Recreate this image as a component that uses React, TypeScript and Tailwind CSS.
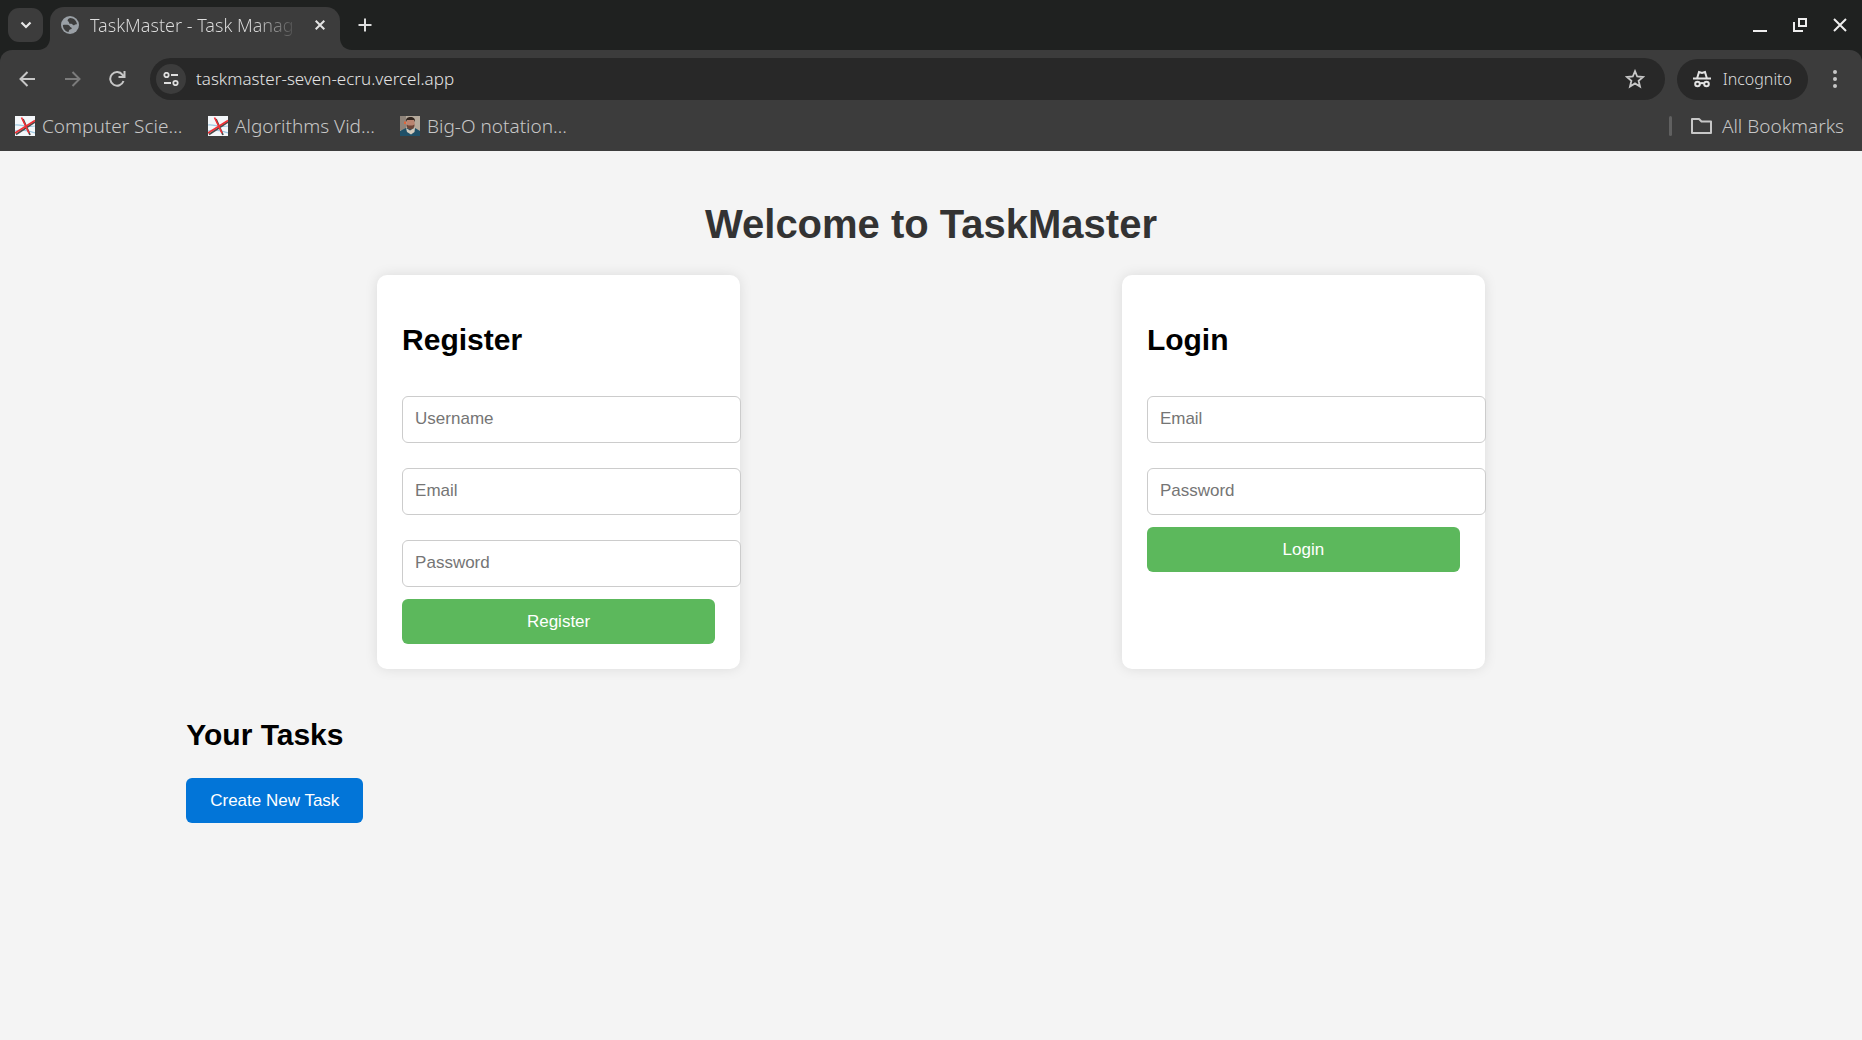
import React from "react";

const chromeFont = "font-['Noto_Sans',sans-serif] font-light";

function Globe() {
  return (
    <svg width="18" height="18" viewBox="0 0 18 18" aria-hidden="true" className="shrink-0">
      <circle cx="9" cy="9" r="9" fill="#9aa0a6" />
      <path d="M9.500 1.900C8 2.200 6.800 3 6.600 4.500C6.500 5.500 8 5.300 8 6.400C8 7.600 9 7.800 10.200 7.800C11.600 7.800 11.600 9.200 12.600 9.200C13.800 9.200 13.600 7.800 16 8.200C15.600 4.600 12.800 2 9.500 1.900ZM1.900 9C3.500 8.800 6.800 8.800 7.800 9.200C8.900 9.700 8.700 11 9.800 11.200C11.200 11.500 11 13 9.800 13.300C8.400 13.600 8 14 7.600 16C4.200 15.400 1.900 12.600 1.900 9Z" fill="#3c3c3c" />
    </svg>
  );
}

function CrossFavicon() {
  return (
    <svg width="20" height="20" viewBox="0 0 20 20" aria-hidden="true" className="shrink-0">
      <rect width="20" height="20" fill="#f4f7fa" />
      <path d="M0 9C6 8 12 12 20 10M0 15C7 13 13 14 20 17" stroke="#9cc6e0" strokeWidth="1.200" fill="none" />
      <path d="M1 18.500 20 6M8 3 15 19" stroke="#4a4a4a" strokeWidth="1.800" fill="none" />
      <path d="M0 17 20 4.500M6.500 1.500 14 17" stroke="#f02f35" strokeWidth="1.700" fill="none" />
    </svg>
  );
}

function PortraitFavicon() {
  return (
    <svg width="20" height="20" viewBox="0 0 20 20" aria-hidden="true" className="shrink-0">
      <rect width="20" height="20" fill="#b5aa9c" />
      <rect width="6" height="14" fill="#8f847a" />
      <path d="M0 20V15L6 12H15L20 15V20Z" fill="#1f5068" />
      <ellipse cx="10.500" cy="7.500" rx="4.200" ry="5.500" fill="#b98470" />
      <path d="M6 6C5.500 2 8 1 10.500 1C13.500 1 15.500 2.500 15 6L14 4H7Z" fill="#33261f" />
      <path d="M6.500 8.500 8.500 9.500H12.500L14.500 8.500C14.500 12 13 13.500 10.500 13.500C8 13.500 6.500 12 6.500 8.500Z" fill="#6b4638" />
      <path d="M6 12 10 14.500 15 11.500 14.500 16 11 18.500 7 16Z" fill="#d3cbbd" />
      <rect x="4" y="5.500" width="2" height="2.500" fill="#e0653a" />
    </svg>
  );
}

function TabStrip() {
  return (
    <div className="flex h-[50px] items-center bg-[#1f2120]">
      <button aria-label="Search tabs" className="ml-2 flex h-[34px] w-[35px] items-center justify-center rounded-[11px] bg-[#3c3c3c]">
        <svg width="12" height="8" viewBox="0 0 12 8" fill="none" stroke="#e8e8e8" strokeWidth="2.200"><path d="M1.500 1.500 6 6l4.500-4.500" /></svg>
      </button>
      <div className="flex h-full items-end">
        <svg width="12" height="12" viewBox="0 0 12 12" className="-ml-[5px]" aria-hidden="true"><path d="M12 0V12H0C7 12 12 7 12 0Z" fill="#3c3c3c" /></svg>
        <div className="flex h-[43px] w-[290px] items-center rounded-t-[14px] bg-[#3c3c3c] pr-3 pb-[7px] pl-[11px]">
          <Globe />
          <span className="ml-[11px] flex-1 bg-linear-to-r from-[#dedede] from-78% to-[#3c3c3c] bg-clip-text text-[18px] whitespace-nowrap text-transparent">TaskMaster - Task Manag</span>
          <button aria-label="Close tab" className="ml-3 flex size-4 items-center justify-center">
            <svg width="10" height="10" viewBox="0 0 10 10" stroke="#e3e3e3" strokeWidth="2"><path d="M.7.7 9.300 9.300M9.300.7.7 9.300" /></svg>
          </button>
        </div>
        <svg width="12" height="12" viewBox="0 0 12 12" aria-hidden="true"><path d="M0 0V12H12C5 12 0 7 0 0Z" fill="#3c3c3c" /></svg>
      </div>
      <button aria-label="New tab" className="ml-[5px] flex size-4 items-center justify-center">
        <svg width="14" height="14" viewBox="0 0 14 14" stroke="#dedede" strokeWidth="2"><path d="M7 .5V13.500M.5 7H13.500" /></svg>
      </button>
      <div className="mr-[15px] ml-auto flex items-center gap-[26px]">
        <button aria-label="Minimize"><svg width="14" height="14" viewBox="0 0 14 14" stroke="#eee" strokeWidth="2"><path d="M0 13H14" /></svg></button>
        <button aria-label="Restore"><svg width="14" height="14" viewBox="0 0 14 14" fill="none" stroke="#eee" strokeWidth="2"><path d="M6 1H13V8H6ZM1 4V13H10" /></svg></button>
        <button aria-label="Close"><svg width="14" height="14" viewBox="0 0 14 14" stroke="#eee" strokeWidth="2"><path d="M1 1 13 13M13 1 1 13" /></svg></button>
      </div>
    </div>
  );
}

function Toolbar() {
  return (
    <div className="flex h-[58px] items-center">
      <div className="ml-[19px] flex items-center gap-7">
        <button aria-label="Back"><svg width="17" height="16" viewBox="0 0 17 16" fill="none" stroke="#c7c7c7" strokeWidth="2"><path d="M16 8H2M8.500 1 1.500 8l7 7" /></svg></button>
        <button aria-label="Forward"><svg width="17" height="16" viewBox="0 0 17 16" fill="none" stroke="#7b7b7b" strokeWidth="2"><path d="M1 8H15M8.500 1l7 7-7 7" /></svg></button>
        <button aria-label="Reload"><svg width="17" height="16" viewBox="0 0 17 16" fill="none" stroke="#c7c7c7" strokeWidth="2"><path d="M14.500 10A6.800 6.800 0 1 1 13.500 3.800L15 5.500M15.500 0V6H9.500" /></svg></button>
      </div>
      <div className="ml-6 flex h-[42px] flex-1 items-center rounded-full bg-[#282828] pr-5 pl-[6px]">
        <button aria-label="Site information" className="flex size-[30px] shrink-0 items-center justify-center rounded-full bg-[#3c3c3c]">
          <svg width="16" height="14" viewBox="0 0 16 14" fill="none" stroke="#dedede" strokeWidth="1.800"><circle cx="3.500" cy="3" r="2.200" /><path d="M8 3H15M1 11H8" /><circle cx="12.500" cy="11" r="2.200" /></svg>
        </button>
        <input aria-label="Address" defaultValue="taskmaster-seven-ecru.vercel.app" className="ml-[10px] min-w-0 flex-1 bg-transparent text-[17px] text-[#e3e3e3] outline-none" />
        <button aria-label="Bookmark this tab">
          <svg width="20" height="20" viewBox="0 0 20 20" fill="none" stroke="#c7c7c7" strokeWidth="1.800"><path d="M10 2.200 12.200 7.500 18 8 13.600 11.800 15 17.500 10 14.400 5 17.500 6.400 11.800 2 8 7.800 7.500Z" /></svg>
        </button>
      </div>
      <button className="ml-3 flex h-[41px] items-center rounded-full bg-[#282828] px-4">
        <svg width="18" height="18" viewBox="0 0 18 18" fill="none" stroke="#e3e3e3" strokeWidth="2" aria-hidden="true">
          <path d="M0 8.500H18M4.200 8 6 2 9 3 12 2 13.800 8" /><circle cx="4.500" cy="14" r="2.300" /><circle cx="13.500" cy="14" r="2.300" /><path d="M7 13.500Q9 12.500 11 13.500" />
        </svg>
        <span className="ml-3 text-[16px] text-[#dedede]">Incognito</span>
      </button>
      <button aria-label="Menu" className="mr-[25px] ml-[25px]"><svg width="4" height="18" viewBox="0 0 4 18" fill="#c7c7c7"><circle cx="2" cy="2" r="2" /><circle cx="2" cy="9" r="2" /><circle cx="2" cy="16" r="2" /></svg></button>
    </div>
  );
}

function Bookmarks() {
  return (
    <nav className="flex h-[43px] items-center pr-[18px] pb-[7px] pl-[15px] text-[19px] text-[#c7c7c7]">
      <a href="#cs" className="flex w-[193px] items-center gap-[7px]"><CrossFavicon />Computer Scie…</a>
      <a href="#algorithms" className="flex w-[192px] items-center gap-[7px]"><CrossFavicon />Algorithms Vid…</a>
      <a href="#big-o" className="flex items-center gap-[7px]"><PortraitFavicon />Big-O notation…</a>
      <span className="mr-[19px] ml-auto h-5 w-[3px] rounded-full bg-[#606060]" />
      <button className="flex items-center gap-[10px]">
        <svg width="21" height="16" viewBox="0 0 21 16" fill="none" stroke="#c7c7c7" strokeWidth="2" strokeLinejoin="round" aria-hidden="true"><path d="M1 1H8L10.500 3.500H20V15H1Z" /></svg>
        All Bookmarks
      </button>
    </nav>
  );
}

function FormCard({ title, fields }: { title: string; fields: string[] }) {
  return (
    <form onSubmit={(e) => e.preventDefault()} className="w-[363px] rounded-[10px] bg-white px-[25px] pt-12 pb-[25px] shadow-[0_0_13px_rgba(0,0,0,0.1)]">
      <h2 className="text-[30px] leading-[34px] font-bold text-black">{title}</h2>
      <div className="mt-[39px] flex flex-col gap-[25px]">
        {fields.map((f) => (
          <input
            key={f}
            aria-label={f}
            placeholder={f}
            type={f === "Password" ? "password" : f === "Email" ? "email" : "text"}
            className="h-[47px] w-[339px] rounded-md border border-[#ccc] bg-white px-3 pb-[2px] text-[17px] placeholder:text-[#757575]"
          />
        ))}
      </div>
      <button className="mt-3 h-[45px] w-full rounded-md bg-[#5cb85c] text-[17px] text-white">{title}</button>
    </form>
  );
}

export default function App() {
  return (
    <div className="flex min-h-screen flex-col bg-[#f4f4f4]">
      <header className={"bg-[#1f2120] " + chromeFont}>
        <TabStrip />
        <div className="rounded-t-xl bg-[#3c3c3c]">
          <Toolbar />
          <Bookmarks />
        </div>
      </header>
      <main className="mx-auto w-4/5 pt-[50px] font-['Liberation_Sans',sans-serif]">
        <h1 className="text-center text-[40px] leading-[46px] font-bold text-[#333]">Welcome to TaskMaster</h1>
        <div className="mt-7 flex justify-around">
          <FormCard title="Register" fields={["Username", "Email", "Password"]} />
          <FormCard title="Login" fields={["Email", "Password"]} />
        </div>
        <section className="mt-[49px]">
          <h2 className="text-[30px] leading-[34px] font-bold text-black">Your Tasks</h2>
          <button className="mt-[26px] h-[45px] rounded-md bg-[#0275d8] px-6 text-[17px] text-white">Create New Task</button>
        </section>
      </main>
    </div>
  );
}
